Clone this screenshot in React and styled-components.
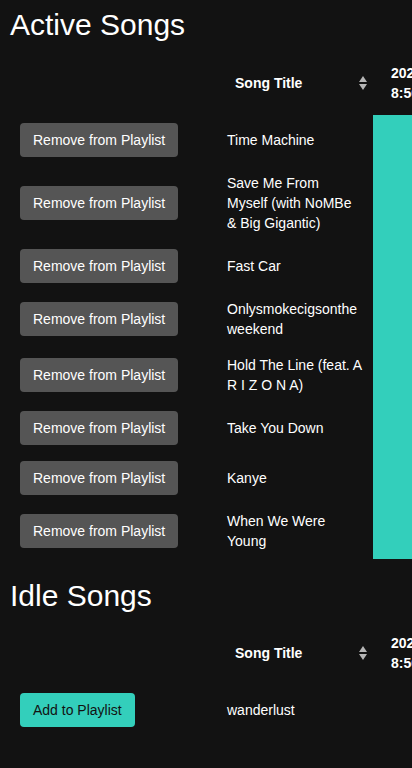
import React from "react";
import styled, { createGlobalStyle } from "styled-components";

const GlobalStyle = createGlobalStyle`
  html, body {
    margin: 0;
    background-color: #121212;
  }
  body {
    font-family: "Liberation Sans", Arial, sans-serif;
    color: #fff;
    overflow-x: hidden;
  }
`;

const Page = styled.div`
  padding: 8px 0 0 10px;
  overflow-x: hidden;
`;

const Section = styled.section`
  & + & {
    margin-top: 20px;
  }
`;

const Heading = styled.h2`
  margin: 0 0 8px 0;
  font-size: 30px;
  font-weight: 400;
  line-height: 1.15;
  color: #fff;
`;

const Table = styled.table`
  table-layout: fixed;
  border-collapse: collapse;
  border-spacing: 0;
  width: 483px;
  font-size: 14px;
  line-height: 20px;

  col.action {
    width: 207px;
  }
  col.title {
    width: 156px;
  }
  col.date {
    width: 120px;
  }
`;

const Th = styled.th`
  padding: 12px 6px 12px 18px;
  text-align: left;
  font-weight: 700;
  vertical-align: middle;
`;

const HeadInner = styled.div`
  display: flex;
  align-items: center;
  justify-content: space-between;
`;

const SortIcon = styled.svg`
  width: 8px;
  height: 16px;
  flex: none;
  fill: #b5b5b5;
`;

const Td = styled.td`
  padding: 8px 10.5px 8px 10px;
  vertical-align: middle;
  overflow-wrap: anywhere;
  background-color: ${({ $fill }) => ($fill ? "#33cfbb" : "transparent")};
`;

const ActionButton = styled.button`
  height: 34px;
  padding: 0 13px;
  border: none;
  border-radius: 4px;
  font-family: inherit;
  font-size: 14px;
  white-space: nowrap;
  cursor: pointer;
  background-color: ${({ $variant }) => ($variant === "add" ? "#33cfbb" : "#555555")};
  color: ${({ $variant }) => ($variant === "add" ? "#121212" : "#ffffff")};
`;

const Sort = () => (
  <SortIcon viewBox="0 0 8 16">
    <polygon points="4,1 8,7 0,7" />
    <polygon points="0,9 8,9 4,15" />
  </SortIcon>
);

const SongTable = ({ songs, active }) => (
  <Table>
    <colgroup>
      <col className="action" />
      <col className="title" />
      <col className="date" />
    </colgroup>
    <thead>
      <tr>
        <Th />
        <Th>
          <HeadInner>
            <span>Song Title</span>
            <Sort />
          </HeadInner>
        </Th>
        <Th>
          <HeadInner>
            <span>2024-05-14 8:56 PM</span>
          </HeadInner>
        </Th>
      </tr>
    </thead>
    <tbody>
      {songs.map((song) => (
        <tr key={song}>
          <Td>
            <ActionButton $variant={active ? "remove" : "add"}>
              {active ? "Remove from Playlist" : "Add to Playlist"}
            </ActionButton>
          </Td>
          <Td>{song}</Td>
          <Td $fill={active} />
        </tr>
      ))}
    </tbody>
  </Table>
);

const activeSongs = [
  "Time Machine",
  "Save Me From Myself (with NoMBe & Big Gigantic)",
  "Fast Car",
  "Onlysmokecigsontheweekend",
  "Hold The Line (feat. A R I Z O N A)",
  "Take You Down",
  "Kanye",
  "When We Were Young",
];

const idleSongs = ["wanderlust"];

export default function App() {
  return (
    <Page>
      <GlobalStyle />
      <Section>
        <Heading>Active Songs</Heading>
        <SongTable songs={activeSongs} active />
      </Section>
      <Section>
        <Heading>Idle Songs</Heading>
        <SongTable songs={idleSongs} />
      </Section>
    </Page>
  );
}
